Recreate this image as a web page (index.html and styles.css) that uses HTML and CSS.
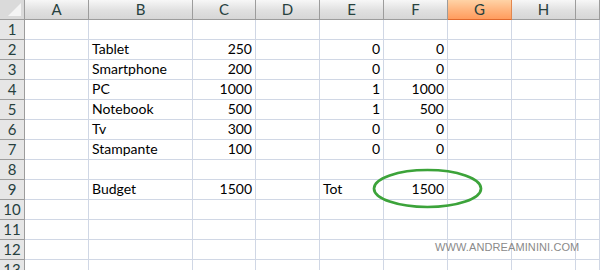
FILE: index.html
```html
<!DOCTYPE html>
<html lang="en">
<head>
    <meta charset="UTF-8">
    <title>Budget</title>
    <link rel="stylesheet" href="styles.css">
</head>
<body>
    <div class="sheet">
        <div class="row head">
            <div class="corner"></div>
            <div class="col">A</div>
            <div class="col">B</div>
            <div class="col">C</div>
            <div class="col">D</div>
            <div class="col">E</div>
            <div class="col">F</div>
            <div class="col active">G</div>
            <div class="col">H</div>
            <div class="col"></div>
        </div>
        <div class="row">
            <div class="num">1</div>
            <div class="cell"></div><div class="cell"></div><div class="cell"></div><div class="cell"></div>
            <div class="cell"></div><div class="cell"></div><div class="cell"></div><div class="cell"></div><div class="cell"></div>
        </div>
        <div class="row">
            <div class="num">2</div>
            <div class="cell"></div><div class="cell">Tablet</div><div class="cell n">250</div><div class="cell"></div>
            <div class="cell n">0</div><div class="cell n">0</div><div class="cell"></div><div class="cell"></div><div class="cell"></div>
        </div>
        <div class="row">
            <div class="num">3</div>
            <div class="cell"></div><div class="cell">Smartphone</div><div class="cell n">200</div><div class="cell"></div>
            <div class="cell n">0</div><div class="cell n">0</div><div class="cell"></div><div class="cell"></div><div class="cell"></div>
        </div>
        <div class="row">
            <div class="num">4</div>
            <div class="cell"></div><div class="cell">PC</div><div class="cell n">1000</div><div class="cell"></div>
            <div class="cell n">1</div><div class="cell n">1000</div><div class="cell"></div><div class="cell"></div><div class="cell"></div>
        </div>
        <div class="row">
            <div class="num">5</div>
            <div class="cell"></div><div class="cell">Notebook</div><div class="cell n">500</div><div class="cell"></div>
            <div class="cell n">1</div><div class="cell n">500</div><div class="cell"></div><div class="cell"></div><div class="cell"></div>
        </div>
        <div class="row">
            <div class="num">6</div>
            <div class="cell"></div><div class="cell">Tv</div><div class="cell n">300</div><div class="cell"></div>
            <div class="cell n">0</div><div class="cell n">0</div><div class="cell"></div><div class="cell"></div><div class="cell"></div>
        </div>
        <div class="row">
            <div class="num">7</div>
            <div class="cell"></div><div class="cell">Stampante</div><div class="cell n">100</div><div class="cell"></div>
            <div class="cell n">0</div><div class="cell n">0</div><div class="cell"></div><div class="cell"></div><div class="cell"></div>
        </div>
        <div class="row">
            <div class="num">8</div>
            <div class="cell"></div><div class="cell"></div><div class="cell"></div><div class="cell"></div>
            <div class="cell"></div><div class="cell"></div><div class="cell"></div><div class="cell"></div><div class="cell"></div>
        </div>
        <div class="row">
            <div class="num">9</div>
            <div class="cell"></div><div class="cell">Budget</div><div class="cell n">1500</div><div class="cell"></div>
            <div class="cell">Tot</div><div class="cell n">1500</div><div class="cell"></div><div class="cell"></div><div class="cell"></div>
        </div>
        <div class="row">
            <div class="num">10</div>
            <div class="cell"></div><div class="cell"></div><div class="cell"></div><div class="cell"></div>
            <div class="cell"></div><div class="cell"></div><div class="cell"></div><div class="cell"></div><div class="cell"></div>
        </div>
        <div class="row">
            <div class="num">11</div>
            <div class="cell"></div><div class="cell"></div><div class="cell"></div><div class="cell"></div>
            <div class="cell"></div><div class="cell"></div><div class="cell"></div><div class="cell"></div><div class="cell"></div>
        </div>
        <div class="row">
            <div class="num">12</div>
            <div class="cell"></div><div class="cell"></div><div class="cell"></div><div class="cell"></div>
            <div class="cell"></div><div class="cell"></div><div class="cell"></div><div class="cell"></div><div class="cell"></div>
        </div>
        <div class="row">
            <div class="num">13</div>
            <div class="cell"></div><div class="cell"></div><div class="cell"></div><div class="cell"></div>
            <div class="cell"></div><div class="cell"></div><div class="cell"></div><div class="cell"></div><div class="cell"></div>
        </div>

        <!-- hand-drawn circle around the total -->
        <svg class="mark" width="111" height="41" viewBox="0 0 111 41">
            <ellipse cx="55.5" cy="20.5" rx="53.5" ry="18.5" fill="none" stroke="#3ca33a" stroke-width="2.7"/>
        </svg>
        <div class="watermark">WWW.ANDREAMININI.COM</div>
    </div>
</body>
</html>
```

FILE: styles.css
```css
* {
    margin: 0;
    padding: 0;
    box-sizing: border-box;
}

body {
    background-color: white;
    overflow: hidden;
}

.sheet {
    position: relative;
    width: 600px;
    height: 270px;
    overflow: hidden;
    font-family: Lato, "Noto Sans", sans-serif;
    font-size: 14px;
    color: black;
}

.row {
    display: grid;
    grid-template-columns: 25px 64px 104px 63px 64px 64px 64px 64px 64px 1fr;
    height: 20px;
}

.cell {
    border-right: 1px solid #d0d7e5;
    border-bottom: 1px solid #d0d7e5;
    padding: 0 3px;
    line-height: 18px;
    white-space: nowrap;
}

.cell.n {
    text-align: right;
    padding-right: 3px;
}

.num {
    background-color: #e6e6e6;
    border-right: 1px solid #9c9c9c;
    border-bottom: 1px solid #9c9c9c;
    color: #27413e;
    text-align: center;
    line-height: 19px;
    font-size: 15px;
}

.head .col,
.corner {
    background: linear-gradient(#f7f7f7, #e0e0e0 55%, #d6d6d6);
    border-right: 1px solid #9c9c9c;
    border-bottom: 1px solid #9c9c9c;
    color: #27413e;
    text-align: center;
    line-height: 19px;
    font-size: 15px;
}

.head .col.active {
    background: linear-gradient(#ffd3a6, #ffb37c 55%, #ff9c5e);
    border-right: 1px solid #e2874e;
    border-bottom: 1px solid #e0692d;
}

.corner {
    position: relative;
    background: #dadada;
}

/* little triangle in the select-all box */
.corner::after {
    content: "";
    position: absolute;
    right: 3px;
    bottom: 3px;
    border-left: 13px solid transparent;
    border-bottom: 13px solid #f4f4f4;
}

.mark {
    position: absolute;
    left: 372px;
    top: 168px;
}

.watermark {
    position: absolute;
    left: 435px;
    top: 241px;
    font-family: "Liberation Sans", Arial, sans-serif;
    font-size: 11px;
    color: #8a8a8a;
    letter-spacing: 0.1px;
}
```
